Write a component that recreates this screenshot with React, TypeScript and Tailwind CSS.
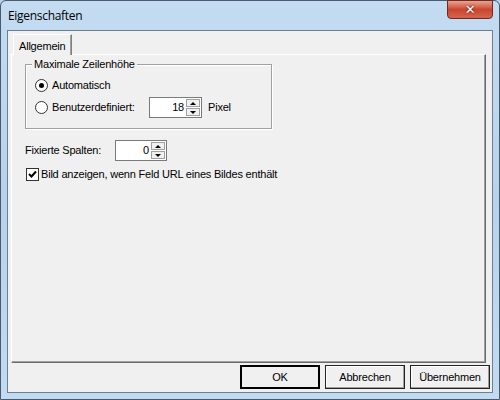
import type { ReactNode } from 'react'

const ui = { fontFamily: '"Liberation Sans", "DejaVu Sans", sans-serif', letterSpacing: '-0.2px' }

function Spin({ value, width }: { value: string; width: string }) {
  return (
    <div className={`flex h-[21px] ${width} border border-[#7a7a7a] bg-white`}>
      <div className="flex-1 flex items-center justify-end pr-[2px] text-black">{value}</div>
      <div className="flex flex-col w-[15px] py-[1px] pr-[1px] gap-[1px]">
        <div className="flex-1 flex items-center justify-center bg-[#f0f0f0] border border-[#a0a0a0]">
          <div className="w-0 h-0 border-l-[3px] border-r-[3px] border-b-[3px] border-l-transparent border-r-transparent border-b-black" />
        </div>
        <div className="flex-1 flex items-center justify-center bg-[#f0f0f0] border border-[#a0a0a0]">
          <div className="w-0 h-0 border-l-[3px] border-r-[3px] border-t-[3px] border-l-transparent border-r-transparent border-t-black" />
        </div>
      </div>
    </div>
  )
}

function Radio({ checked, children }: { checked?: boolean; children: ReactNode }) {
  return (
    <div className="flex items-center gap-[4px] h-[14px]">
      <div className="w-[13px] h-[13px] rounded-full border border-[#333] bg-white flex items-center justify-center">
        {checked && <div className="w-[5px] h-[5px] rounded-full bg-black" />}
      </div>
      <span>{children}</span>
    </div>
  )
}

function Button({ children, main }: { children: ReactNode; main?: boolean }) {
  return (
    <div
      className={`w-[80px] h-[24px] flex items-center justify-center bg-[#f0f0f0] text-black ${
        main ? 'border-2 border-black' : 'border border-[#222] shadow-[inset_-1px_-1px_0_#a0a0a0,inset_1px_1px_0_#fff]'
      }`}
    >
      {children}
    </div>
  )
}

export default function App() {
  return (
    <div className="w-[500px] h-[400px] bg-[#b9d1ea] overflow-hidden text-[11px]" style={ui}>
      <div className="w-full h-full rounded-t-[6px] border border-[#4a5a6a] bg-gradient-to-b from-[#c4dcf2] via-[#b7d2ec] to-[#c2dbf3] flex flex-col px-[6px] pb-[6px]">
        {/* title bar */}
        <div className="h-[29px] flex items-start justify-between">
          <span
            className="pt-[6px] pl-[1px] text-[12px] text-black tracking-[-0.3px]"
            style={{ fontFamily: '"Open Sans", "Noto Sans", sans-serif' }}
          >
            Eigenschaften
          </span>
          <div className="w-[46px] h-[19px] -mt-[1px] rounded-b-[4px] border border-[#6b2a22] bg-gradient-to-b from-[#e8a493] via-[#c9452e] to-[#d4654e] flex items-center justify-center">
            <span
              className="text-white font-bold text-[13px] leading-none"
              style={{ fontFamily: '"DejaVu Sans", sans-serif', textShadow: '0 0 2px #400' }}
            >
              ✕
            </span>
          </div>
        </div>

        {/* client area */}
        <div className="flex-1 border border-[#6e7f90] bg-[#f0f0f0] flex flex-col text-black">
          <div className="px-[3px] pt-[3px] flex flex-col">
            <div className="flex">
              <div className="ml-[2px] h-[21px] px-[5px] pt-[3px] border border-b-0 border-l-white border-t-white border-r-[#808080] shadow-[inset_-1px_0_0_#a0a0a0] bg-[#f0f0f0] relative z-10 -mb-[1px]">
                Allgemein
              </div>
            </div>
            <div className="h-[309px] mr-[3px] border border-l-white border-t-white border-r-[#696969] border-b-[#696969] shadow-[inset_-1px_-1px_0_#a0a0a0] px-[13px] pt-[9px] flex flex-col">
              {/* group box */}
              <div className="relative w-[247px] h-[65px] border border-[#a0a0a0] shadow-[1px_1px_0_#fff,inset_1px_1px_0_#fff] pl-[9px] pt-[13px] flex flex-col gap-[5px]">
                <span className="absolute -top-[8px] left-[6px] bg-[#f0f0f0] px-[2px] leading-[14px]">
                  Maximale Zeilenhöhe
                </span>
                <Radio checked>Automatisch</Radio>
                <div className="flex items-center">
                  <div className="w-[114px]">
                    <Radio>Benutzerdefiniert:</Radio>
                  </div>
                  <Spin value="18" width="w-[53px]" />
                  <span className="ml-[6px]">Pixel</span>
                </div>
              </div>

              <div className="flex items-center mt-[11px]">
                <span className="w-[90px]">Fixierte Spalten:</span>
                <Spin value="0" width="w-[52px]" />
              </div>

              <div className="flex items-center gap-[2px] mt-[5px] ml-[1px]">
                <div className="w-[13px] h-[13px] border border-[#333] bg-white flex items-center justify-center">
                  <svg width="9" height="9" viewBox="0 0 9 9">
                    <path d="M1 4 L3.5 6.5 L8 1.5" stroke="#000" strokeWidth="2" fill="none" />
                  </svg>
                </div>
                <span>Bild anzeigen, wenn Feld URL eines Bildes enthält</span>
              </div>
            </div>
          </div>

          <div className="flex-1 flex items-start justify-end gap-[5px] pr-[2px] pt-[2px]">
            <Button main>OK</Button>
            <Button>Abbrechen</Button>
            <Button>Übernehmen</Button>
          </div>
        </div>
      </div>
    </div>
  )
}
